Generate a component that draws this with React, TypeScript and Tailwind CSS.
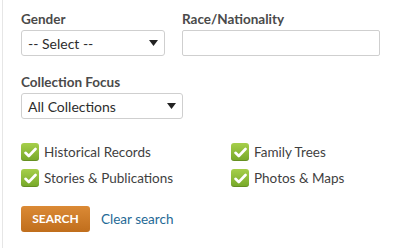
function Check() {
  return (
    <span className="flex h-[18px] w-[18px] items-center justify-center rounded-[3px] bg-gradient-to-b from-[#a6cf4a] to-[#76a828] shadow-[inset_0_-1px_0_rgba(0,0,0,0.15)]">
      <svg width="13" height="11" viewBox="0 0 13 11">
        <path d="M1.5 5.8 L4.8 9 L11.5 2" fill="none" stroke="#fff" strokeWidth="2.6" strokeLinecap="round" strokeLinejoin="round" />
      </svg>
    </span>
  );
}

function Caret() {
  return (
    <svg width="9" height="6" viewBox="0 0 9 6">
      <path d="M0 0 H9 L4.5 6 Z" fill="#222" />
    </svg>
  );
}

function Option({ label }: { label: string }) {
  return (
    <div className="flex items-center gap-[5px] h-[18px]">
      <Check />
      <span className="text-[13.5px] text-[#3f3f3f]">{label}</span>
    </div>
  );
}

export default function App() {
  return (
    <div className="h-[248px] w-[400px] bg-white font-['Lato',sans-serif]">
      <div className="ml-[2px] h-full border-l border-[#e6e6e6] pl-[18px] pt-[10px]">
        <div className="flex gap-[17px]">
          <div className="flex flex-col">
            <label className="text-[13.5px] font-bold leading-[18px] text-[#4a4a4a]">Gender</label>
            <div className="mt-[2px] flex h-[26px] w-[144px] items-center justify-between rounded-[3px] border border-[#cfcfcf] px-[6px]">
              <span className="text-[14px] text-[#2d2d2d]">-- Select --</span>
              <Caret />
            </div>
          </div>
          <div className="flex flex-col">
            <label className="text-[13.5px] font-bold leading-[18px] text-[#4a4a4a]">Race/Nationality</label>
            <div className="mt-[2px] h-[26px] w-[198px] rounded-[2px] border border-[#cfcfcf]" />
          </div>
        </div>

        <div className="mt-[17px] flex flex-col">
          <label className="text-[13.5px] font-bold leading-[18px] text-[#4a4a4a]">Collection Focus</label>
          <div className="mt-[2px] flex h-[26px] w-[162px] items-center justify-between rounded-[3px] border border-[#cfcfcf] px-[6px]">
            <span className="text-[14px] text-[#2d2d2d]">All Collections</span>
            <Caret />
          </div>
        </div>

        <div className="mt-[24px] grid grid-cols-[210px_1fr] gap-y-[8px]">
          <Option label="Historical Records" />
          <Option label="Family Trees" />
          <Option label="Stories & Publications" />
          <Option label="Photos & Maps" />
        </div>

        <div className="mt-[19px] flex items-center gap-[11px]">
          <button className="h-[26px] w-[69px] rounded-[3px] bg-gradient-to-b from-[#db8a35] to-[#c06e1c] text-[12px] font-bold text-white">
            SEARCH
          </button>
          <span className="text-[13.5px] text-[#1f6a96]">Clear search</span>
        </div>
      </div>
    </div>
  );
}
